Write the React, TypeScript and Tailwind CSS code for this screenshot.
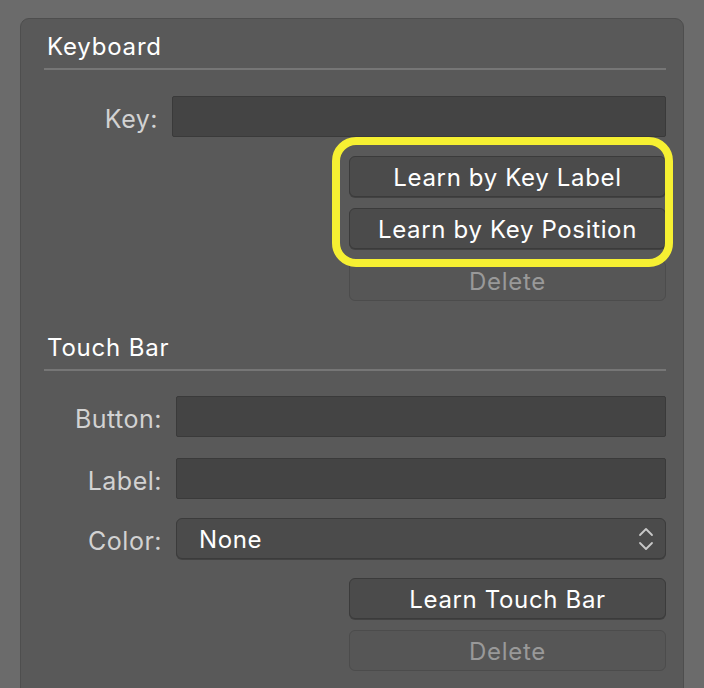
import React from "react";

const font = { fontFamily: "Inter, 'Noto Sans', sans-serif" };

function Field({ label, labelW }: { label: string; labelW: string }) {
  return (
    <div className="flex items-center h-[41px]">
      <div className={`${labelW} text-right pr-[14px] pt-[6px] text-[25px] tracking-[0.5px] text-[#d2d2d2]`}>{label}</div>
      <div className="flex-1 h-[41px] bg-[#444444] border border-[#3a3a3a] rounded-[2px]" />
    </div>
  );
}

function Btn({ children, disabled }: { children: React.ReactNode; disabled?: boolean }) {
  return (
    <div
      className={
        disabled
          ? "ml-auto w-[317px] h-[41px] flex items-center justify-center pt-[3px] rounded-[6px] border border-[#4c4c4c] bg-[#565656] text-[#999999] text-[24px] tracking-[0.75px]"
          : "ml-auto w-[317px] h-[41px] flex items-center justify-center pt-[3px] rounded-[6px] border border-[#3b3b3b] bg-[#4b4b4b] text-white text-[24px] tracking-[0.65px] shadow-[0_1px_0_rgba(0,0,0,0.25)]"
      }
    >
      {children}
    </div>
  );
}

export default function App() {
  return (
    <div className="w-[704px] h-[688px] bg-[#6b6b6b] overflow-hidden pt-[18px] pl-[20px] relative" style={font}>
      <div className="w-[664px] h-[700px] bg-[#595959] border border-[#4e4e4e] rounded-t-[9px] pl-[23px] pr-[17px] pt-[14px]">
        <div className="h-[28px] leading-[28px] text-[24px] tracking-[0.8px] text-white pl-[3px]">Keyboard</div>
        <div className="mt-[7px] h-[2px] bg-[#767676]" />
        <div className="mt-[26px]">
          <Field label="Key:" labelW="w-[128px]" />
        </div>
        <div className="mt-[19px] flex flex-col gap-[11px] pr-0">
          <Btn>Learn by Key Label</Btn>
          <Btn>Learn by Key Position</Btn>
          <Btn disabled>Delete</Btn>
        </div>
        <div className="mt-[33px] h-[28px] leading-[28px] text-[24px] tracking-[0.8px] text-white pl-[3px]">Touch Bar</div>
        <div className="mt-[7px] h-[2px] bg-[#767676]" />
        <div className="mt-[25px]">
          <Field label="Button:" labelW="w-[132px]" />
        </div>
        <div className="mt-[21px]">
          <Field label="Label:" labelW="w-[132px]" />
        </div>
        <div className="mt-[19px] flex items-center h-[41px]">
          <div className="w-[132px] text-right pr-[14px] pt-[6px] text-[25px] tracking-[0.5px] text-[#d2d2d2]">Color:</div>
          <div className="flex-1 h-[41px] flex items-center justify-between rounded-[6px] border border-[#3b3b3b] bg-[#4b4b4b] shadow-[0_1px_0_rgba(0,0,0,0.25)] pl-[22px] pr-[10px]">
            <span className="text-white text-[24px] tracking-[0.6px] pt-[3px]">None</span>
            <svg width="18" height="26" viewBox="0 0 18 26" fill="none" stroke="#c8c8c8" strokeWidth="1.8" strokeLinecap="round" strokeLinejoin="round">
              <path d="M3 9 L9 3 L15 9" />
              <path d="M3 17 L9 23 L15 17" />
            </svg>
          </div>
        </div>
        <div className="mt-[19px] flex flex-col gap-[11px]">
          <Btn>Learn Touch Bar</Btn>
          <Btn disabled>Delete</Btn>
        </div>
      </div>
      <div className="absolute left-[332px] top-[137px] w-[341px] h-[130px] rounded-[24px] border-[8px] border-[#f6f032] pointer-events-none" />
    </div>
  );
}
